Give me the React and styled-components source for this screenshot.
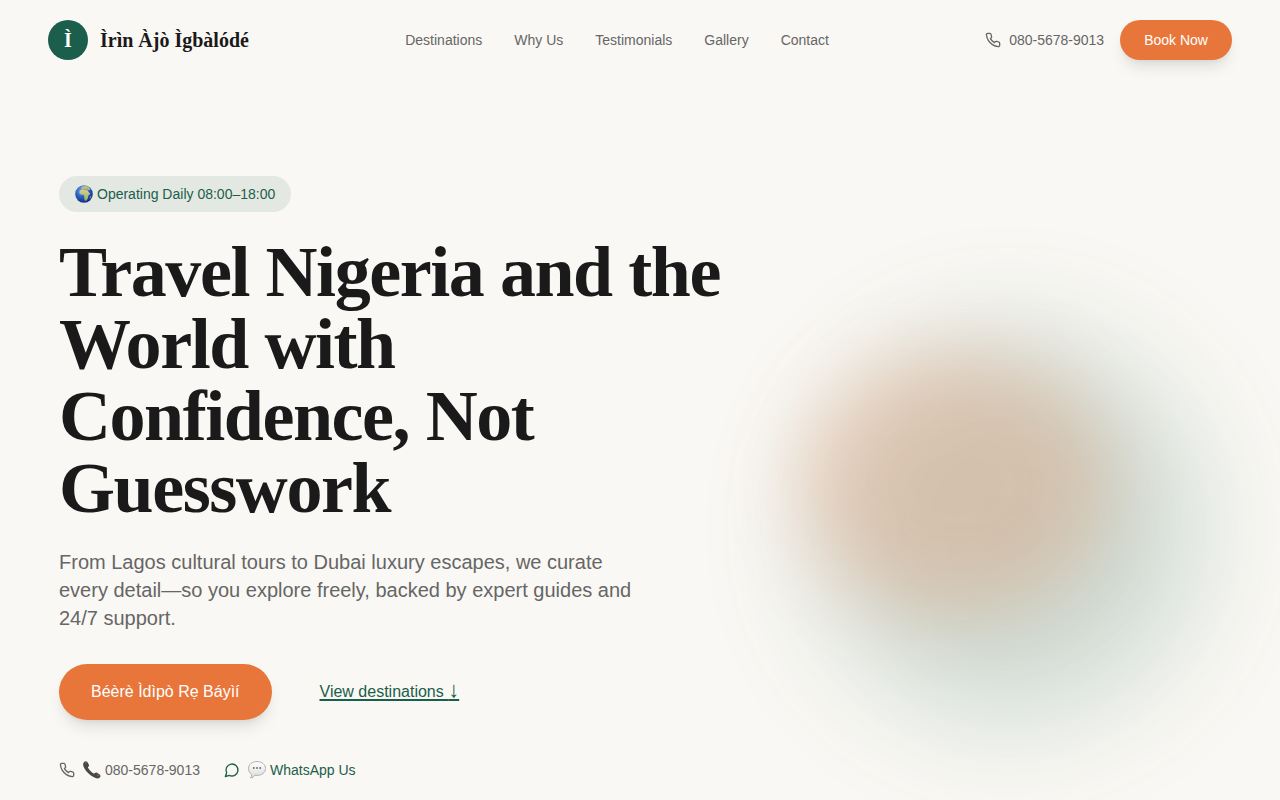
import React from 'react';
import styled, { createGlobalStyle } from 'styled-components';

const colors = {
  background: '#faf8f4',
  ink: '#1a1a1a',
  muted: '#666666',
  green: '#1b5e4b',
  orange: '#e8763a',
};

const GlobalStyle = createGlobalStyle`
  * {
    box-sizing: border-box;
  }

  body {
    margin: 0;
    background-color: ${colors.background};
    color: ${colors.ink};
    font-family: 'Liberation Sans', Arial, sans-serif;
    font-size: 16px;
    line-height: 24px;
  }
`;

const Page = styled.div`
  position: relative;
  min-height: 100vh;
  overflow: hidden;
`;

const Header = styled.header`
  display: flex;
  align-items: center;
  justify-content: space-between;
  padding: 20px 48px;
`;

const Brand = styled.a`
  display: flex;
  align-items: center;
  gap: 12px;
  color: ${colors.ink};
  font-family: 'Liberation Serif', 'Times New Roman', serif;
  font-size: 20px;
  font-weight: 700;
  line-height: 28px;
  text-decoration: none;
`;

const BrandMark = styled.span`
  width: 40px;
  height: 40px;
  display: flex;
  align-items: center;
  justify-content: center;
  border-radius: 50%;
  background-color: ${colors.green};
  color: #ffffff;
`;

const Nav = styled.nav`
  display: flex;
  gap: 32px;
`;

const TextLink = styled.a`
  display: flex;
  align-items: center;
  gap: 8px;
  color: ${(props) => (props.$green ? colors.green : colors.muted)};
  font-size: 14px;
  line-height: 20px;
  text-decoration: none;
`;

const HeaderActions = styled.div`
  display: flex;
  align-items: center;
  gap: 16px;
`;

const Button = styled.button`
  height: ${(props) => (props.$large ? '56px' : '40px')};
  padding: 0 ${(props) => (props.$large ? '32px' : '24px')};
  border: none;
  border-radius: 28px;
  background-color: ${colors.orange};
  color: #ffffff;
  font-family: inherit;
  font-size: ${(props) => (props.$large ? '16px' : '14px')};
  box-shadow: 0 10px 15px -3px rgba(0, 0, 0, 0.1), 0 4px 6px -4px rgba(0, 0, 0, 0.1);
  cursor: pointer;
`;

const Hero = styled.main`
  position: relative;
  display: flex;
  flex-direction: column;
  align-items: flex-start;
  padding: 96px 59px 20px;
`;

const Badge = styled.span`
  display: flex;
  align-items: center;
  padding: 8px 16px;
  border-radius: 18px;
  background-color: rgba(27, 94, 75, 0.1);
  color: ${colors.green};
  font-size: 14px;
  line-height: 20px;
`;

const Title = styled.h1`
  max-width: 672px;
  margin: 24px 0;
  font-family: 'Liberation Serif', 'Times New Roman', serif;
  font-size: 72px;
  font-weight: 700;
  line-height: 72px;
  letter-spacing: -0.02em;
`;

const Lead = styled.p`
  max-width: 576px;
  margin: 0 0 32px;
  color: ${colors.muted};
  font-size: 20px;
  line-height: 28px;
`;

const Actions = styled.div`
  display: flex;
  align-items: center;
  gap: 48px;
  margin-bottom: 40px;
`;

const DestinationsLink = styled.a`
  color: ${colors.green};
  text-decoration: underline;
  text-decoration-thickness: 2px;
  text-decoration-skip-ink: none;
  text-underline-offset: 2px;
`;

const Arrow = styled.span`
  font-size: 22px;
  line-height: 16px;
`;

const Contacts = styled.div`
  display: flex;
  gap: 24px;
`;

const WithEmoji = styled.span`
  display: flex;
  align-items: center;
  gap: 4px;
`;

const Glow = styled.div`
  position: absolute;
  border-radius: 50%;
  pointer-events: none;
`;

const GreenGlow = styled(Glow)`
  top: 336px;
  right: 80px;
  width: 384px;
  height: 384px;
  background-color: ${colors.green};
  filter: blur(60px);
  opacity: 0.2;
`;

const OrangeGlow = styled(Glow)`
  top: 352px;
  right: 168px;
  width: 312px;
  height: 264px;
  background-color: ${colors.orange};
  filter: blur(40px);
  opacity: 0.24;
`;

const navItems = ['Destinations', 'Why Us', 'Testimonials', 'Gallery', 'Contact'];

function LineIcon({ path }) {
  return (
    <svg
      width="16"
      height="16"
      viewBox="0 0 24 24"
      fill="none"
      stroke="currentColor"
      strokeWidth="2"
      strokeLinecap="round"
      strokeLinejoin="round"
      aria-hidden="true"
    >
      <path d={path} />
    </svg>
  );
}

const phonePath =
  'M22 16.92v3a2 2 0 0 1-2.18 2 19.79 19.79 0 0 1-8.63-3.07 19.5 19.5 0 0 1-6-6 19.79 19.79 0 0 1-3.07-8.67A2 2 0 0 1 4.11 2h3a2 2 0 0 1 2 1.72 12.84 12.84 0 0 0 .7 2.81 2 2 0 0 1-.45 2.11L8.09 9.91a16 16 0 0 0 6 6l1.27-1.27a2 2 0 0 1 2.11-.45 12.84 12.84 0 0 0 2.81.7A2 2 0 0 1 22 16.92z';
const messagePath = 'M7.9 20A9 9 0 1 0 4 16.1L2 22Z';

function GlobeEmoji() {
  return (
    <svg width="18" height="18" viewBox="0 0 18 18" aria-hidden="true">
      <defs>
        <radialGradient id="sea" cx="0.4" cy="0.3" r="0.7">
          <stop offset="0" stopColor="#79a9e4" />
          <stop offset="0.5" stopColor="#2c62c6" />
          <stop offset="1" stopColor="#152f85" />
        </radialGradient>
        <linearGradient id="land" x1="0" y1="0" x2="0" y2="1">
          <stop offset="0" stopColor="#dcd08a" />
          <stop offset="1" stopColor="#8db46a" />
        </linearGradient>
      </defs>
      <circle cx="9" cy="9" r="8.8" fill="url(#sea)" />
      <path
        d="M5 5.6 7 4.5l2.3.2 1.5.6 1.8-.1 1.2 2 1.5 1.6-1 .8-1.2 1.7-.2 2-1.5 2.2-1.3.2-.9-2.3.1-2.1-.9-1.7-2.2.2-1.7-1.4-.1-1.7z"
        fill="url(#land)"
      />
      <path d="M6.2 3.6 6 2.5 7.7 1.3l3-.7 3 1.5 1.8 2.3-1.5.9-1.8-.8-1.6.3-1-.9-1.3.6z" fill="#b9bd7c" />
      <path d="m15 11.5 1-.6-.3 1.8-.9 1z" fill="#8dae62" />
    </svg>
  );
}

function ReceiverEmoji() {
  return (
    <svg width="18" height="18" viewBox="0 0 18 18" aria-hidden="true">
      <path
        d="M1.1.9C2.3-.2 3.6.1 4.4 1l1.5 2.7c.4.9.1 1.5-.6 2-.4.4-.4.9 0 1.6a14 14 0 0 0 4.8 4.9c.8.5 1.3.5 1.8-.1.7-.7 1.4-.8 2.2-.3l2.5 1.7c1.2.9 1.2 2.1.2 3-1.5 1.4-3.7 1.1-6.4-.4-4-2.3-7.2-5.4-9.2-9.1C-.1 4.8-.3 2.3 1.1.9z"
        fill="#484848"
      />
      <path d="M2 2.2c.6-.7 1.4-.8 1.9-.1M13.6 13.4l2.5 1.7" fill="none" stroke="#7d7d7d" strokeWidth="0.8" />
    </svg>
  );
}

function SpeechEmoji() {
  return (
    <svg width="18" height="18" viewBox="0 0 18 18" aria-hidden="true">
      <defs>
        <linearGradient id="bubble" x1="0" y1="0" x2="0" y2="1">
          <stop offset="0" stopColor="#ffffff" />
          <stop offset="1" stopColor="#dcdcdc" />
        </linearGradient>
      </defs>
      <path
        d="M9 .5c4.8 0 8.5 3 8.5 7s-3.7 6.9-8.5 6.9c-.8 0-1.5-.1-2.2-.2-1 1.6-2.5 2.6-4.2 2.7.8-1 1.1-2.3 1-3.6C1.7 12.1.5 10 .5 7.5c0-4 3.7-7 8.5-7z"
        fill="url(#bubble)"
        stroke="#a8a8a8"
        strokeWidth="0.9"
      />
      <circle cx="5.8" cy="7" r="0.9" fill="#666666" />
      <circle cx="9" cy="7" r="0.9" fill="#666666" />
      <circle cx="12.2" cy="7" r="0.9" fill="#666666" />
    </svg>
  );
}

function App() {
  return (
    <Page>
      <GlobalStyle />
      <GreenGlow />
      <OrangeGlow />
      <Header>
        <Brand href="#home">
          <BrandMark>Ì</BrandMark>
          Ìrìn Àjò Ìgbàlódé
        </Brand>
        <Nav>
          {navItems.map((item) => (
            <TextLink key={item} href={`#${item.toLowerCase().replace(' ', '-')}`}>
              {item}
            </TextLink>
          ))}
        </Nav>
        <HeaderActions>
          <TextLink href="tel:08056789013">
            <LineIcon path={phonePath} />
            080-5678-9013
          </TextLink>
          <Button type="button">Book Now</Button>
        </HeaderActions>
      </Header>
      <Hero>
        <Badge>
          <WithEmoji>
            <GlobeEmoji />
            Operating Daily 08:00–18:00
          </WithEmoji>
        </Badge>
        <Title>Travel Nigeria and the World with Confidence, Not Guesswork</Title>
        <Lead>
          From Lagos cultural tours to Dubai luxury escapes, we curate every detail—so you explore
          freely, backed by expert guides and 24/7 support.
        </Lead>
        <Actions>
          <Button type="button" $large>
            Béèrè Ìdìpò Rẹ Báyìí
          </Button>
          <DestinationsLink href="#destinations">
            View destinations <Arrow>↓</Arrow>
          </DestinationsLink>
        </Actions>
        <Contacts>
          <TextLink href="tel:08056789013">
            <LineIcon path={phonePath} />
            <WithEmoji>
              <ReceiverEmoji />
              080-5678-9013
            </WithEmoji>
          </TextLink>
          <TextLink href="#whatsapp" $green>
            <LineIcon path={messagePath} />
            <WithEmoji>
              <SpeechEmoji />
              WhatsApp Us
            </WithEmoji>
          </TextLink>
        </Contacts>
      </Hero>
    </Page>
  );
}

export default App;
